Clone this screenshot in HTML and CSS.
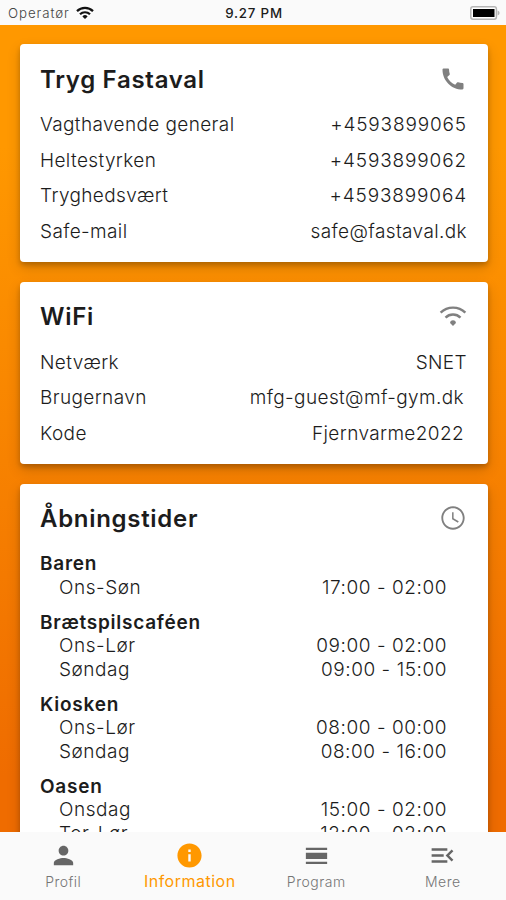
FILE: index.html
```
<!DOCTYPE html>
<html lang="da">
<head>
  <meta charset="utf-8">
  <title>Information</title>
  <link rel="stylesheet" href="styles.css">
</head>
<body>
  <div class="app">
    <header class="statusbar">
      <div class="carrier">
        <span>Operatør</span>
        <svg class="signal" viewBox="0 0 18 13">
          <g fill="none" stroke="#111" stroke-width="2.2">
            <path d="M1 5.1a11.3 11.3 0 0 1 16 0"/>
            <path d="M4 8.3a7.1 7.1 0 0 1 10 0"/>
          </g>
          <path fill="#111" d="M9 13L6.4 10.4a3.7 3.7 0 0 1 5.2 0z"/>
        </svg>
      </div>
      <div class="clock">9.27 PM</div>
      <svg class="battery" viewBox="0 0 30 14">
        <rect x=".8" y=".8" width="25.6" height="12.4" rx="2.2" fill="#fff" stroke="#b5b5b5" stroke-width="1.5"/>
        <rect x="3" y="3" width="21.5" height="8" fill="#000"/>
        <path d="M27.6 4.6q2 .8 2 2.4t-2 2.4z" fill="#b5b5b5"/>
      </svg>
    </header>

    <main class="content">
      <section class="card">
        <div class="card-head">
          <h2>Tryg Fastaval</h2>
          <svg class="icon" viewBox="0 0 24 24"><path d="M20.01 15.38c-1.23 0-2.42-.2-3.53-.56-.35-.12-.74-.03-1.01.24l-1.57 1.97c-2.83-1.35-5.48-3.9-6.89-6.83l1.95-1.66c.27-.28.35-.67.24-1.02-.37-1.11-.56-2.3-.56-3.53 0-.54-.45-.99-.99-.99H4.19C3.65 3 3 3.24 3 3.99 3 13.28 10.73 21 20.01 21c.71 0 .99-.63.99-1.18v-3.45c0-.54-.45-.99-.99-.99z"/></svg>
        </div>
        <div class="row"><span>Vagthavende general</span><span class="phone">+4593899065</span></div>
        <div class="row"><span>Heltestyrken</span><span class="phone">+4593899062</span></div>
        <div class="row"><span>Tryghedsvært</span><span class="phone">+4593899064</span></div>
        <div class="row"><span>Safe-mail</span><span>safe@fastaval.dk</span></div>
      </section>

      <section class="card">
        <div class="card-head">
          <h2>WiFi</h2>
          <svg class="icon" viewBox="0 0 24 24">
            <g fill="none" stroke="#808080" stroke-width="2.1">
              <path d="M1.4 9.2a15 15 0 0 1 21.2 0"/>
              <path d="M5.6 13.4a9.1 9.1 0 0 1 12.8 0"/>
            </g>
            <path d="M12 20.6l-2.5-2.5a2.4 2.4 0 1 1 5 0z"/>
          </svg>
        </div>
        <div class="row"><span>Netværk</span><span>SNET</span></div>
        <div class="row copy"><span>Brugernavn</span><span>mfg-guest@mf-gym.dk</span></div>
        <div class="row copy"><span>Kode</span><span>Fjernvarme2022</span></div>
      </section>

      <section class="card">
        <div class="card-head">
          <h2>Åbningstider</h2>
          <svg class="icon" viewBox="0 0 24 24"><path d="M11.99 2C6.47 2 2 6.48 2 12s4.47 10 9.99 10C17.52 22 22 17.52 22 12S17.52 2 11.99 2zM12 20.4c-4.64 0-8.4-3.76-8.4-8.4s3.76-8.4 8.4-8.4 8.4 3.76 8.4 8.4-3.76 8.4-8.4 8.4z"/><path d="M12.5 7H11.2v6l5 3 .7-1.15-4.4-2.6z"/></svg>
        </div>
        <div class="place">
          <h3>Baren</h3>
          <div class="hours"><span>Ons-Søn</span><span>17:00 - 02:00</span></div>
        </div>
        <div class="place">
          <h3>Brætspilscaféen</h3>
          <div class="hours"><span>Ons-Lør</span><span>09:00 - 02:00</span></div>
          <div class="hours"><span>Søndag</span><span>09:00 - 15:00</span></div>
        </div>
        <div class="place">
          <h3>Kiosken</h3>
          <div class="hours"><span>Ons-Lør</span><span>08:00 - 00:00</span></div>
          <div class="hours"><span>Søndag</span><span>08:00 - 16:00</span></div>
        </div>
        <div class="place">
          <h3>Oasen</h3>
          <div class="hours"><span>Onsdag</span><span>15:00 - 02:00</span></div>
          <div class="hours"><span>Tor-Lør</span><span>12:00 - 02:00</span></div>
        </div>
      </section>
    </main>

    <nav class="tabbar">
      <a class="tab">
        <svg viewBox="0 0 24 24"><path d="M12 12c2.21 0 4-1.79 4-4s-1.79-4-4-4-4 1.79-4 4 1.79 4 4 4zm0 2c-2.67 0-8 1.34-8 4v2h16v-2c0-2.66-5.33-4-8-4z"/></svg>
        <span>Profil</span>
      </a>
      <a class="tab active">
        <svg viewBox="0 0 24 24"><path d="M12 2C6.48 2 2 6.48 2 12s4.48 10 10 10 10-4.48 10-10S17.52 2 12 2zm1 15h-2v-6h2v6zm0-8h-2V7h2v2z"/></svg>
        <span>Information</span>
      </a>
      <a class="tab">
        <svg viewBox="0 0 24 24"><path d="M3.2 5.5h17.6v2H3.2zM3.2 9.7h17.6v5.2H3.2zM3.2 17.1h17.6v2H3.2z"/></svg>
        <span>Program</span>
      </a>
      <a class="tab">
        <svg viewBox="0 0 24 24"><path d="M3 18h13v-2H3v2zm0-5h10v-2H3v2zm0-7v2h13V6H3zm18 9.59L17.42 12 21 8.41 19.59 7l-5 5 5 5L21 15.59z"/></svg>
        <span>Mere</span>
      </a>
    </nav>
  </div>
</body>
</html>
```
FILE: styles.css
```
* {
  box-sizing: border-box;
}

body {
  margin: 0;
  font-family: Inter, "Liberation Sans", sans-serif;
  color: #1c1c1c;
}

.app {
  display: flex;
  flex-direction: column;
  height: 900px;
  overflow: hidden;
}

.statusbar {
  display: grid;
  grid-template-columns: 1fr auto 1fr;
  align-items: center;
  height: 25px;
  padding: 1px 6px 0 8px;
  background: #fafafa;
  font-size: 13px;
}

.carrier {
  display: flex;
  align-items: center;
  gap: 6px;
  color: #444;
  letter-spacing: 0.9px;
  font-size: 13.3px;
  font-weight: 300;
}

.signal {
  width: 18px;
  height: 13px;
  margin-bottom: 2px;
}

.clock {
  font-size: 13.3px;
  font-weight: 500;
  letter-spacing: 0.8px;
}

.battery {
  width: 30px;
  height: 14px;
  justify-self: end;
}

.content {
  flex: 1;
  min-height: 0;
  overflow: hidden;
  padding: 19px 18.5px 0 20px;
  background: linear-gradient(#ff9800 15%, #ef6c00 93%);
}

.card {
  padding: 20px 20.5px 13px 20px;
  margin-bottom: 19.5px;
  background: #fff;
  border-radius: 4px;
  box-shadow: 0 3px 5px rgba(0, 0, 0, 0.2), 0 6px 14px rgba(0, 0, 0, 0.16);
}

.card-head {
  display: flex;
  justify-content: space-between;
  align-items: center;
  height: 30px;
  margin-bottom: 13px;
}

h2 {
  margin: 0;
  font-size: 24px;
  font-weight: 600;
  letter-spacing: 0.7px;
}

.icon {
  width: 28px;
  height: 28px;
  margin-bottom: 1px;
  fill: #808080;
}

.row {
  display: flex;
  justify-content: space-between;
  line-height: 35.5px;
  font-size: 19px;
  font-weight: 300;
  letter-spacing: 0.38px;
}

.phone {
  letter-spacing: 0.85px;
}

.copy {
  padding-right: 3px;
}

.place {
  margin-bottom: 11.8px;
  font-size: 19px;
  line-height: 23.4px;
}

.card-head + .place {
  margin-top: 18.6px;
}

h3 {
  margin: 0;
  font-size: 19px;
  font-weight: 600;
  letter-spacing: 0.75px;
}

.hours {
  display: flex;
  justify-content: space-between;
  padding: 0 20px 0 19px;
  font-weight: 300;
  letter-spacing: 0.55px;
}

.tabbar {
  display: flex;
  height: 68px;
  background: #fafafa;
}

.tab {
  flex: 1;
  display: flex;
  flex-direction: column;
  align-items: center;
  padding-top: 9px;
  color: #757575;
  font-size: 14px;
  font-weight: 300;
  line-height: 23px;
  letter-spacing: 0.5px;
}

.tab svg {
  width: 29px;
  height: 29px;
  fill: #666;
}

.active {
  color: #ff9800;
  font-size: 16px;
  font-weight: 400;
  line-height: 22px;
}

.active svg {
  fill: #ff9800;
}
```
